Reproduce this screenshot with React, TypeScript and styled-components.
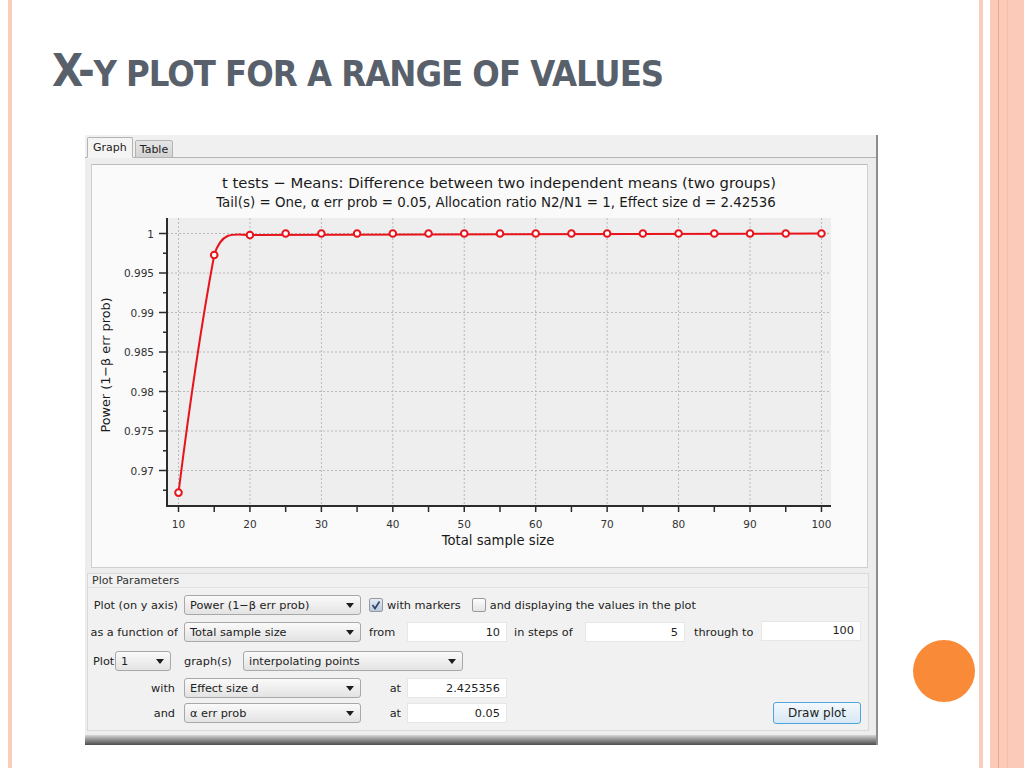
import React from 'react'
import styled, { createGlobalStyle } from 'styled-components'

const GlobalStyle = createGlobalStyle`
  html, body {
    margin: 0;
    padding: 0;
    background: #ffffff;
  }
  * {
    box-sizing: border-box;
  }
`

const UI_FONT = `"DejaVu Sans", "Liberation Sans", sans-serif`

// chart geometry, relative to the plot panel
const X = (v: number) => 86.5 + (v - 10) * 7.144
const Y = (p: number) => 68.5 + (1 - p) * 7900

const xTicks = Array.from({ length: 19 }, (_, i) => 10 + i * 5)
const xGrid = Array.from({ length: 10 }, (_, i) => 10 + i * 10)
const yMajor = [1, 0.995, 0.99, 0.985, 0.98, 0.975, 0.97]
const yMinor = [0.9975, 0.9925, 0.9875, 0.9825, 0.9775, 0.9725, 0.9675]

const points = xTicks.map((v) => {
  if (v === 10) return { v, p: 0.9672 }
  if (v === 15) return { v, p: 0.99728 }
  if (v === 20) return { v, p: 0.9998 }
  return { v, p: 1 }
})

const curve = `M${X(10)},${Y(0.9672)} C${X(11.5)},${Y(0.978)} ${X(13.5)},${Y(0.99)} ${X(15)},${Y(0.99728)} C${X(16)},${Y(1.0002)} ${X(17.5)},${Y(1)} ${X(20)},${Y(0.9998)} L${X(100)},${Y(1)}`

const App = () => {
  return (
    <>
      <GlobalStyle />
      <Slide>
        <LeftGutter />
        <Stripe />
        <Main>
          <Title>
            <Big>X-</Big>Y PLOT FOR A RANGE OF VALUES
          </Title>
          <Body>
            <Window>
              <TabBar>
                <Tab $active>Graph</Tab>
                <Tab>Table</Tab>
              </TabBar>
              <GraphArea>
                <PlotPanel>
                  <Chart />
                </PlotPanel>
              </GraphArea>
              <Group>
                <GroupTitle>Plot Parameters</GroupTitle>

                <Row $top={7}>
                  <Label>Plot (on y axis)</Label>
                  <Select $width={177}>Power (1−β err prob)</Select>
                  <Check $checked />
                  <Text>with markers</Text>
                  <Check style={{ marginLeft: 11 }} />
                  <Text>and displaying the values in the plot</Text>
                </Row>

                <Row $top={7}>
                  <Label>as a function of</Label>
                  <Select $width={177}>Total sample size</Select>
                  <Short>from</Short>
                  <Field>10</Field>
                  <Text $width={78} $pad={7}>in steps of</Text>
                  <Field>5</Field>
                  <Text $width={76} $pad={9}>through to</Text>
                  <Field $raise>100</Field>
                </Row>

                <Row $top={9}>
                  <Text $width={27} $pad={5}>Plot</Text>
                  <Select $width={56}>1</Select>
                  <Text $width={72} $pad={13}>graph(s)</Text>
                  <Select $width={220}>interpolating points</Select>
                </Row>

                <Row $top={7}>
                  <Label $narrow>with</Label>
                  <Select $width={177}>Effect size d</Select>
                  <Short $right>at</Short>
                  <Field>2.425356</Field>
                </Row>

                <Row $top={5}>
                  <Label $narrow>and</Label>
                  <Select $width={177}>α err prob</Select>
                  <Short $right>at</Short>
                  <Field>0.05</Field>
                  <Spacer />
                  <Button>Draw plot</Button>
                </Row>
              </Group>
              <BottomBar />
            </Window>
            <Aside>
              <Dot />
            </Aside>
          </Body>
        </Main>
        <Stripe />
        <WhiteGap />
        <RightBand>
          <BandLine />
          <BandEdge />
        </RightBand>
      </Slide>
    </>
  )
}

const Chart = () => (
  <svg width="776" height="403" viewBox="0 0 776 403" style={{ display: 'block' }}>
    <text x="407" y="23" textAnchor="middle" fontFamily={UI_FONT} fontSize="14.8" fill="#1a1a1a">
      t tests − Means: Difference between two independent means (two groups)
    </text>
    <text x="404" y="42" textAnchor="middle" fontFamily={UI_FONT} fontSize="13.4" fill="#1a1a1a">
      Tail(s) = One, α err prob = 0.05, Allocation ratio N2/N1 = 1, Effect size d = 2.42536
    </text>

    <rect x="75" y="53" width="664" height="288" fill="#eeeeee" />

    {xGrid.map((v) => (
      <line key={`gx${v}`} x1={X(v)} x2={X(v)} y1="53" y2="341" stroke="#b9b9b9" strokeWidth="1" strokeDasharray="2 2" />
    ))}
    {yMajor.map((p) => (
      <line key={`gy${p}`} x1="75" x2="739" y1={Y(p)} y2={Y(p)} stroke="#b9b9b9" strokeWidth="1" strokeDasharray="2 2" />
    ))}

    <line x1="75" x2="75" y1="53" y2="342" stroke="#2b2b2b" strokeWidth="2" />
    <line x1="74" x2="739" y1="341" y2="341" stroke="#2b2b2b" strokeWidth="2" />

    {yMajor.map((p) => (
      <g key={`ty${p}`}>
        <line x1="67" x2="75" y1={Y(p)} y2={Y(p)} stroke="#2b2b2b" strokeWidth="1.5" />
        <text x="62" y={Y(p) + 4} textAnchor="end" fontFamily={UI_FONT} fontSize="10.5" fill="#333">
          {p}
        </text>
      </g>
    ))}
    {yMinor.map((p) => (
      <line key={`my${p}`} x1="71" x2="75" y1={Y(p)} y2={Y(p)} stroke="#2b2b2b" strokeWidth="1.5" />
    ))}

    {xTicks.map((v) => (
      <line key={`tx${v}`} x1={X(v)} x2={X(v)} y1="341" y2="347" stroke="#2b2b2b" strokeWidth="1.5" />
    ))}
    {xGrid.map((v) => (
      <text key={`lx${v}`} x={X(v)} y="363" textAnchor="middle" fontFamily={UI_FONT} fontSize="10.5" fill="#333">
        {v}
      </text>
    ))}

    <text x="406" y="380" textAnchor="middle" fontFamily={UI_FONT} fontSize="13.2" fill="#1a1a1a">
      Total sample size
    </text>
    <text
      x="0"
      y="0"
      textAnchor="middle"
      fontFamily={UI_FONT}
      fontSize="12.8"
      fill="#1a1a1a"
      transform="translate(18 200) rotate(-90)"
    >
      Power (1−β err prob)
    </text>

    <path d={curve} fill="none" stroke="#e8141c" strokeWidth="2" />
    {points.map(({ v, p }) => (
      <circle key={`pt${v}`} cx={X(v)} cy={Y(p)} r="3.3" fill="#ffffff" stroke="#e8141c" strokeWidth="2" />
    ))}
  </svg>
)

const Slide = styled.div`
  width: 1024px;
  height: 768px;
  display: flex;
  background: #ffffff;
  overflow: hidden;
`

const LeftGutter = styled.div`
  width: 8px;
  flex-shrink: 0;
`

const Stripe = styled.div`
  width: 4px;
  flex-shrink: 0;
  background: #fbcdbc;
`

const WhiteGap = styled.div`
  width: 7px;
  flex-shrink: 0;
`

const RightBand = styled.div`
  width: 34px;
  flex-shrink: 0;
  background: #fbcab8;
  display: flex;
  padding-left: 8px;
`

const BandLine = styled.div`
  width: 1px;
  background: #eca78d;
`

const BandEdge = styled.div`
  width: 1px;
  margin-left: 8px;
  background: #f7bfa9;
`

const Main = styled.div`
  flex: 1;
  display: flex;
  flex-direction: column;
`

const Title = styled.h1`
  margin: 48px 0 0 40px;
  font-family: "DejaVu Sans Condensed", "Liberation Sans Narrow", "Liberation Sans", sans-serif;
  font-weight: 700;
  font-size: 36px;
  line-height: 46px;
  letter-spacing: -1px;
  color: #58606b;
  white-space: nowrap;
`

const Big = styled.span`
  font-size: 45px;
  letter-spacing: -1.5px;
`

const Body = styled.div`
  display: flex;
  margin: 38px 0 0 73px;
`

const Aside = styled.div`
  flex: 1;
  display: flex;
  justify-content: flex-end;
  padding-right: 4px;
`

const Dot = styled.div`
  width: 62px;
  height: 62px;
  margin-top: 505px;
  border-radius: 50%;
  background: #f98a38;
`

const Window = styled.div`
  width: 793px;
  height: 610px;
  flex-shrink: 0;
  display: flex;
  flex-direction: column;
  background: #ededed;
  border-right: 2px solid #8d8d8d;
  font-family: ${UI_FONT};
  font-size: 11.3px;
  color: #222;
`

const TabBar = styled.div`
  height: 23px;
  display: flex;
  align-items: flex-end;
  gap: 2px;
  padding-left: 2px;
  border-bottom: 1px solid #b4b4b4;
  background: #f0f0f0;
`

const Tab = styled.div<{ $active?: boolean }>`
  height: ${(p) => (p.$active ? 21 : 18)}px;
  padding: 0 ${(p) => (p.$active ? 5 : 4)}px;
  margin-bottom: -1px;
  display: flex;
  align-items: center;
  font-size: 11px;
  border: 1px solid #b4b4b4;
  border-bottom: ${(p) => (p.$active ? '1px solid #f4f4f4' : '1px solid #b4b4b4')};
  border-radius: 2px 2px 0 0;
  background: ${(p) => (p.$active ? '#f4f4f4' : 'linear-gradient(#e6e6e6, #d2d2d2)')};
`

const GraphArea = styled.div`
  padding: 6px 0 0 6px;
`

const PlotPanel = styled.div`
  width: 777px;
  height: 404px;
  background: #fafafa;
  border: 1px solid #cfcfcf;
  border-top-color: #bdbdbd;
`

const Group = styled.div`
  margin: 5px 7px 0 2px;
  height: 158px;
  display: flex;
  flex-direction: column;
  background: #f1f1f1;
  border: 1px solid #dadada;
`

const GroupTitle = styled.div`
  height: 14px;
  line-height: 14px;
  padding-left: 4px;
  font-size: 11px;
  color: #333;
  border-bottom: 1px solid #e2e2e2;
`

const Row = styled.div<{ $top: number }>`
  height: 20px;
  margin-top: ${(p) => p.$top}px;
  display: flex;
  align-items: center;
`

const Label = styled.div<{ $narrow?: boolean }>`
  width: ${(p) => (p.$narrow ? 87 : 90)}px;
  margin-right: ${(p) => (p.$narrow ? 9 : 6)}px;
  display: flex;
  justify-content: flex-end;
  overflow: hidden;
  white-space: nowrap;
`

const Text = styled.div<{ $width?: number; $pad?: number }>`
  ${(p) => (p.$width ? `width: ${p.$width}px;` : '')}
  padding-left: ${(p) => p.$pad ?? 4}px;
  white-space: nowrap;
  flex-shrink: 0;
`

const Short = styled.div<{ $right?: boolean }>`
  width: 32px;
  margin: 0 6px 0 8px;
  text-align: ${(p) => (p.$right ? 'right' : 'left')};
  white-space: nowrap;
`

const Select = styled.div<{ $width: number }>`
  position: relative;
  width: ${(p) => p.$width}px;
  height: 20px;
  flex-shrink: 0;
  padding-left: 5px;
  display: flex;
  align-items: center;
  border: 1px solid #a8a8a8;
  border-radius: 3px;
  background: linear-gradient(#fafafa, #e3e3e3);
  white-space: nowrap;

  &::after {
    content: '';
    position: absolute;
    right: 6px;
    top: 7px;
    border-left: 4px solid transparent;
    border-right: 4px solid transparent;
    border-top: 5px solid #1e1e1e;
  }
`

const Field = styled.div<{ $raise?: boolean }>`
  width: 100px;
  height: 20px;
  flex-shrink: 0;
  padding-right: 6px;
  display: flex;
  align-items: center;
  justify-content: flex-end;
  background: #ffffff;
  border: 1px solid #e6e6e6;
  ${(p) => (p.$raise ? 'margin-top: -3px;' : '')}
`

const CheckBox = styled.div<{ $checked?: boolean }>`
  width: 14px;
  height: 14px;
  margin-left: 8px;
  flex-shrink: 0;
  display: flex;
  align-items: center;
  justify-content: center;
  border: 1px solid #9a9a9a;
  border-radius: 2px;
  background: ${(p) => (p.$checked ? 'linear-gradient(#e4ecf6, #b9c9de)' : 'linear-gradient(#fdfdfd, #e4e4e4)')};
`

const Check = ({ $checked, style }: { $checked?: boolean; style?: React.CSSProperties }) => (
  <CheckBox $checked={$checked} style={style}>
    {$checked && (
      <svg width="10" height="10" viewBox="0 0 10 10">
        <path d="M1.5 5 L4 8.5 L8.5 1.5" fill="none" stroke="#2d3f66" strokeWidth="1.6" />
      </svg>
    )}
  </CheckBox>
)

const Spacer = styled.div`
  flex: 1;
`

const Button = styled.div`
  width: 88px;
  height: 22px;
  margin-right: 7px;
  display: flex;
  align-items: center;
  justify-content: center;
  font-size: 12px;
  border: 1px solid #4fa6dc;
  border-radius: 3px;
  background: linear-gradient(#f3f8fc, #d7e8f5);
`

const BottomBar = styled.div`
  margin-top: auto;
  height: 10px;
  background: linear-gradient(#d6d6d6, #9a9a9a 40%, #4d4d4d);
`

export default App
